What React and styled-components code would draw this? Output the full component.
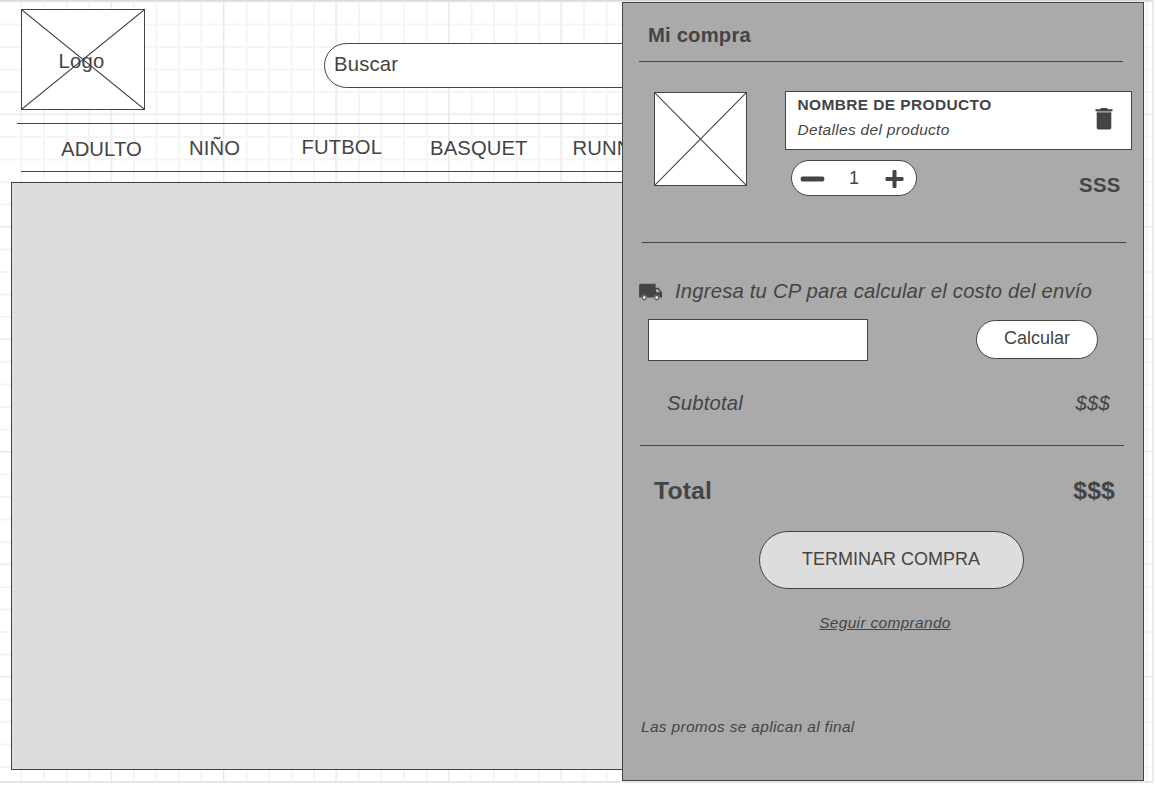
import React from "react";
import styled, { createGlobalStyle } from "styled-components";

const INK = "#444444";

const GlobalStyle = createGlobalStyle`
  * { box-sizing: border-box; }
  body {
    margin: 0;
    background: #ffffff;
    color: ${INK};
    font-family: "Liberation Sans", Arial, sans-serif;
  }
  button, input { font: inherit; color: inherit; margin: 0; }
`;

const Canvas = styled.div`
  position: relative;
  width: 1155px;
  height: 788px;
  overflow: hidden;
  background: #ffffff;
`;

const Paper = styled.div`
  width: 1154px;
  height: 783px;
  border-top: 1px solid #d9d9d9;
  border-right: 2px solid #ebebeb;
  border-bottom: 2px solid #e6e6e6;
  background-image:
    linear-gradient(90deg, #e8e8e8 1px, transparent 1px),
    linear-gradient(180deg, #e8e8e8 1px, transparent 1px),
    linear-gradient(90deg, #f5f5f5 1.5px, transparent 1.5px),
    linear-gradient(180deg, #f5f5f5 1.5px, transparent 1.5px);
  background-size: 112.5px 112.5px, 112.5px 112.5px, 22.5px 22.5px, 22.5px 22.5px;
  background-position: 110.5px 0, 0 112.5px, 20.5px 0, 0 22.5px;
`;

const TopBar = styled.header`
  display: flex;
  align-items: flex-start;
  height: 122px;
  padding: 8px 0 0 21px;
`;

const CrossedBox = styled.div`
  display: grid;
  place-items: center;
  flex: none;
  width: ${(p) => p.$w}px;
  height: ${(p) => p.$h}px;
  background: #ffffff;
  border: 1px solid ${INK};
  > * { grid-area: 1 / 1; }
`;

const Cross = styled.svg`
  display: block;
  width: 100%;
  height: 100%;
  stroke: ${INK};
  stroke-width: 1.1;
`;

const LogoText = styled.span`
  font-size: 20.25px;
  letter-spacing: 0.25px;
  line-height: 24px;
  margin: 3px 3px 0 0;
`;

const SearchBox = styled.div`
  display: flex;
  flex: none;
  width: 400px;
  height: 45px;
  margin: 34px 0 0 179px;
  padding: 8px 9px;
  border: 1px solid ${INK};
  border-radius: 22.5px;
  background: #ffffff;
  font-size: 20.25px;
  letter-spacing: 0.2px;
  line-height: 25px;
`;

const Nav = styled.nav`
  display: flex;
  width: 700px;
  height: 49px;
  border-top: 1px solid ${INK};
  margin-left: 17px;
  padding-left: 4px;
`;

const NavList = styled.div`
  flex: 1;
  display: flex;
  border-bottom: 1px solid ${INK};
  padding: 13px 0 0 40px;
`;

const NavItem = styled.a`
  flex: none;
  width: ${(p) => p.$w}px;
  margin-top: ${(p) => p.$drop || 0}px;
  font-size: 20.25px;
  letter-spacing: 0.12px;
  line-height: 24px;
`;

const Hero = styled.section`
  width: 800px;
  height: 588px;
  margin: 10px 0 0 11px;
  border: 1px solid ${INK};
  background: #dddddd;
`;

const Drawer = styled.aside`
  position: absolute;
  top: 2px;
  left: 622px;
  display: flex;
  flex-direction: column;
  width: 522px;
  height: 779px;
  border: 1px solid ${INK};
  background: #aaaaaa;
`;

const DrawerTitle = styled.h2`
  height: 59px;
  margin: 0 20px 0 16px;
  padding: 20px 0 0 9px;
  border-bottom: 1px solid ${INK};
  font-size: 20.25px;
  letter-spacing: 0.18px;
  line-height: 24px;
`;

const ProductRow = styled.div`
  display: flex;
  height: 181px;
  margin: 0 17px 0 19px;
  border-bottom: 1px solid ${INK};
  padding: 29px 0 0 12px;
`;

const Thumb = styled.div`
  padding-top: 1px;
  margin-right: 38px;
`;

const ProductInfo = styled.div`
  flex: none;
  width: 347px;
`;

const ProductCard = styled.div`
  display: flex;
  justify-content: space-between;
  height: 59px;
  padding: 3px 18px 0 11.5px;
  border: 1px solid ${INK};
  background: #ffffff;
`;

const ProductName = styled.div`
  font-size: 15.45px;
  letter-spacing: 0.41px;
  line-height: 20px;
  font-weight: bold;
`;

const ProductDetails = styled.div`
  margin-top: 5px;
  font-size: 15.45px;
  letter-spacing: 0.34px;
  line-height: 20px;
  font-style: italic;
`;

const TrashIcon = styled.svg`
  width: 18px;
  height: 22px;
  margin-top: 12.5px;
  fill: ${INK};
`;

const QuantityRow = styled.div`
  display: flex;
  justify-content: space-between;
  padding: 10px 11.5px 0 6px;
`;

const Stepper = styled.div`
  display: flex;
  align-items: center;
  justify-content: space-between;
  width: 126px;
  height: 36px;
  padding: 0 12px 0 8px;
  border: 1px solid ${INK};
  border-radius: 18px;
  background: #ffffff;
  font-size: 18px;
`;

const Quantity = styled.span`
  padding-right: 2px;
`;

const StepButton = styled.button`
  display: flex;
  padding: 2px 0 0;
  border: 0;
  background: none;
  svg { display: block; fill: ${INK}; }
`;

const LinePrice = styled.div`
  padding-top: 13px;
  font-size: 20.25px;
  letter-spacing: 0.3px;
  line-height: 24px;
  font-weight: bold;
`;

const Shipping = styled.div`
  height: 203px;
  margin: 0 19px 0 17px;
  border-bottom: 1px solid ${INK};
`;

const ShippingLabel = styled.div`
  display: flex;
  padding-top: 36px;
  margin-left: -1px;
  font-size: 20.25px;
  letter-spacing: 0.2px;
  line-height: 24px;
  font-style: italic;
  white-space: nowrap;
`;

const TruckIcon = styled.svg`
  width: 24px;
  height: 18px;
  margin: 3.5px 12px 0 0;
  fill: ${INK};
`;

const PostcodeRow = styled.div`
  display: flex;
  justify-content: space-between;
  align-items: flex-start;
  padding: 16px 26px 0 8px;
`;

const PostcodeInput = styled.input`
  width: 220px;
  height: 42px;
  border: 1px solid ${INK};
  border-radius: 0;
  background: #ffffff;
`;

const PillButton = styled.button`
  width: ${(p) => p.$w}px;
  height: ${(p) => p.$h}px;
  padding: 0 0 2px;
  border: 1px solid ${INK};
  border-radius: ${(p) => p.$h / 2}px;
  background: ${(p) => p.$fill};
  font-size: 18px;
`;

const CalcButton = styled(PillButton)`
  margin-top: 1px;
`;

const SubtotalRow = styled.div`
  display: flex;
  justify-content: space-between;
  padding: 30px 14px 0 27px;
  font-size: 20.25px;
  letter-spacing: 0.2px;
  line-height: 24px;
  font-style: italic;
`;

const TotalRow = styled.div`
  display: flex;
  justify-content: space-between;
  padding: 29px 28px 0 31px;
  font-size: 24.75px;
  letter-spacing: 0.12px;
  line-height: 31px;
  font-weight: bold;
`;

const Actions = styled.div`
  display: flex;
  flex-direction: column;
  align-items: center;
  padding: 25px 0 0 16px;
`;

const ContinueLink = styled.a`
  margin: 24px 12px 0 0;
  font-size: 15.45px;
  letter-spacing: 0.34px;
  line-height: 20px;
  font-style: italic;
  text-decoration: underline;
`;

const PromoNote = styled.p`
  margin: 84px 0 0 18px;
  font-size: 15.45px;
  letter-spacing: 0.34px;
  line-height: 20px;
  font-style: italic;
`;

const categories = [
  { label: "ADULTO", w: 128, drop: -0.5 },
  { label: "NIÑO", w: 112.5, drop: -1 },
  { label: "FUTBOL", w: 128.5, drop: -2 },
  { label: "BASQUET", w: 142.5, drop: -1 },
  { label: "RUNNING", w: 110, drop: -1 },
];

function Diagonals({ w, h }) {
  return (
    <Cross viewBox={`0 0 ${w} ${h}`}>
      <path d={`M0 0L${w} ${h}M${w} 0L0 ${h}`} />
    </Cross>
  );
}

export default function App() {
  return (
    <Canvas>
      <GlobalStyle />
      <Paper>
        <TopBar>
          <CrossedBox $w={124} $h={101}>
            <Diagonals w={122} h={99} />
            <LogoText>Logo</LogoText>
          </CrossedBox>
          <SearchBox>Buscar</SearchBox>
        </TopBar>
        <Nav>
          <NavList>
            {categories.map((c) => (
              <NavItem key={c.label} $w={c.w} $drop={c.drop}>{c.label}</NavItem>
            ))}
          </NavList>
        </Nav>
        <Hero />
      </Paper>
      <Drawer>
        <DrawerTitle>Mi compra</DrawerTitle>
        <ProductRow>
          <Thumb>
            <CrossedBox $w={93} $h={94}>
              <Diagonals w={91} h={92} />
            </CrossedBox>
          </Thumb>
          <ProductInfo>
            <ProductCard>
              <div>
                <ProductName>NOMBRE DE PRODUCTO</ProductName>
                <ProductDetails>Detalles del producto</ProductDetails>
              </div>
              <TrashIcon viewBox="0 0 18 22">
                <rect x="1.7" y="3" width="14.6" height="2" fill="#b5b5b5" />
                <path d="M0.5 1.2H5L6 0H12L13 1.2H17.5V3.3H0.5ZM1.7 4.5H16.3V19.8Q16.3 21.5 14.6 21.5H3.4Q1.7 21.5 1.7 19.8Z" />
              </TrashIcon>
            </ProductCard>
            <QuantityRow>
              <Stepper>
                <StepButton aria-label="Restar">
                  <svg width="25" height="6"><rect x="0.7" y="0.5" width="23.6" height="5" rx="1.8" /></svg>
                </StepButton>
                <Quantity>1</Quantity>
                <StepButton aria-label="Sumar">
                  <svg width="19" height="18">
                    <rect x="0.5" y="7" width="18" height="4" rx="1.2" />
                    <rect x="7.5" y="0" width="4" height="18" rx="1.2" />
                  </svg>
                </StepButton>
              </Stepper>
              <LinePrice>SSS</LinePrice>
            </QuantityRow>
          </ProductInfo>
        </ProductRow>
        <Shipping>
          <ShippingLabel>
            <TruckIcon viewBox="0 0 24 18">
              <path
                fillRule="evenodd"
                d="M1.8 0.8H16.6V4.8H19.6L23 9.2V14.6H0.1V2.5Q0.1 0.8 1.8 0.8ZM17 6.2V9.2H21.4L19.2 6.2Z"
              />
              <circle cx="5.3" cy="14.6" r="2.7" fill={INK} stroke="#bdbdbd" strokeWidth="0.4" />
              <circle cx="17.7" cy="14.6" r="2.7" fill={INK} stroke="#bdbdbd" strokeWidth="0.4" />
              <circle cx="5.3" cy="14.6" r="1.5" fill="#eeeeee" />
              <circle cx="17.7" cy="14.6" r="1.5" fill="#eeeeee" />
            </TruckIcon>
            <span>Ingresa tu CP para calcular el costo del envío</span>
          </ShippingLabel>
          <PostcodeRow>
            <PostcodeInput aria-label="CP" />
            <CalcButton $w={122} $h={39} $fill="#ffffff">Calcular</CalcButton>
          </PostcodeRow>
          <SubtotalRow>
            <span>Subtotal</span>
            <span>$$$</span>
          </SubtotalRow>
        </Shipping>
        <TotalRow>
          <span>Total</span>
          <span>$$$</span>
        </TotalRow>
        <Actions>
          <PillButton $w={265} $h={58} $fill="#dddddd">TERMINAR COMPRA</PillButton>
          <ContinueLink>Seguir comprando</ContinueLink>
        </Actions>
        <PromoNote>Las promos se aplican al final</PromoNote>
      </Drawer>
    </Canvas>
  );
}
